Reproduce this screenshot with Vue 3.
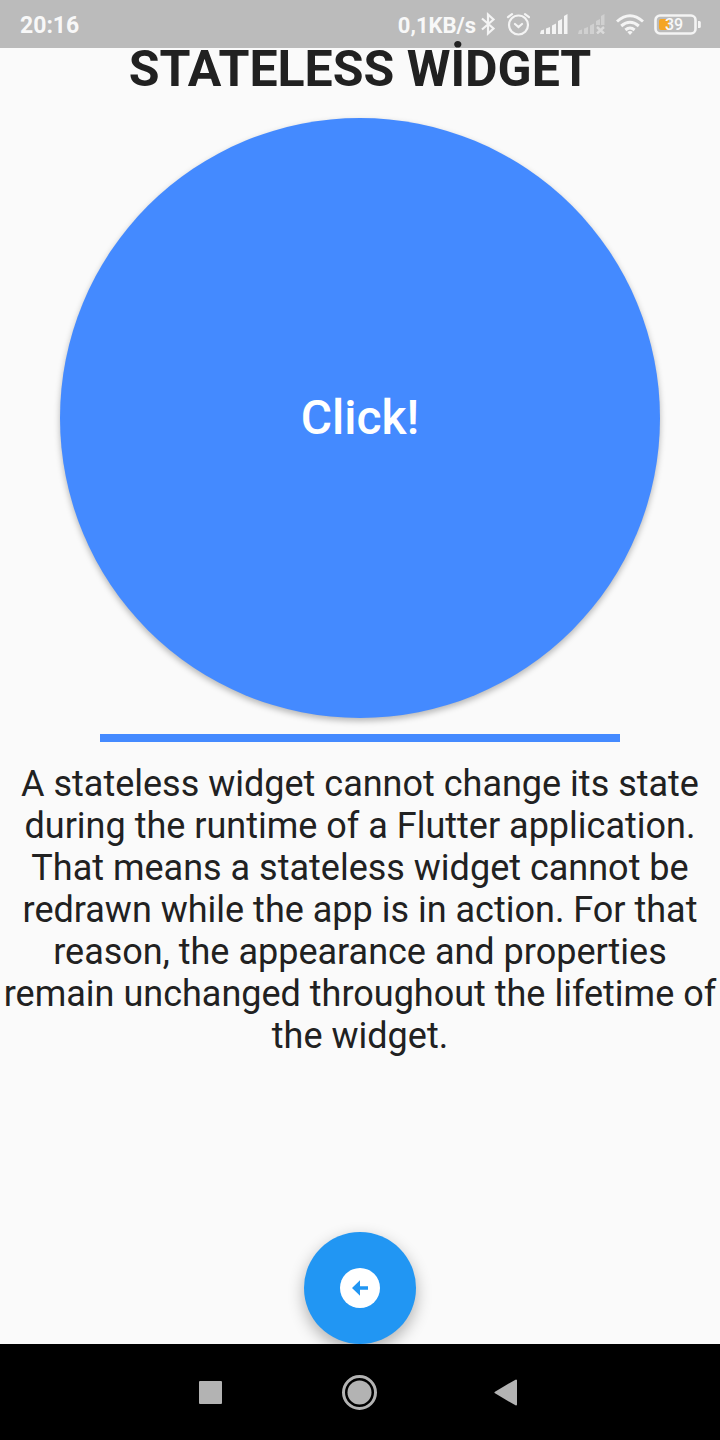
<script setup>
const description =
  'A stateless widget cannot change its state during the runtime of a Flutter application. That means a stateless widget cannot be redrawn while the app is in action. For that reason, the appearance and properties remain unchanged throughout the lifetime of the widget.'
</script>

<template>
  <div class="screen">
    <header class="status">
      <time class="clock">20:16</time>
      <div class="indicators">
        <span class="speed">0,1KB/s</span>
        <svg class="bluetooth" width="16" height="24" viewBox="0 0 16 24" fill="none" stroke="#f4f4f4" stroke-width="2.200" aria-hidden="true">
          <path d="M2 6.500 13.500 16.500 8 21.500V2.500l5.500 5L2 17.500" />
        </svg>
        <svg class="alarm" width="24" height="24" viewBox="0 0 24 24" fill="none" stroke="#f4f4f4" stroke-width="2.200" stroke-linecap="round" aria-hidden="true">
          <circle cx="12.500" cy="13" r="9.500" />
          <path d="M2 5.200 6 2.200M23 5.200 19 2.200M9 12l3.500 3 3.500-3" />
        </svg>
        <svg class="signal" width="28" height="20" viewBox="0 0 28 20" fill="#f4f4f4" aria-hidden="true">
          <path d="M0 20 1 16.500 4 15.500V20ZM6 14.500 10 13V20H6ZM12 11.500 16 9.500V20H12ZM18 7 22 5V20H18ZM24 2 27.500 0V20H24Z" />
        </svg>
        <svg class="signal-off" width="28" height="20" viewBox="0 0 28 20" fill="#d0d0d0" aria-hidden="true">
          <path d="M0 20 1 16.500 4 15.500V20ZM6 14.500 10 13V20H6ZM12 11.500 16 9.500V20H12ZM18 7 22 5V11H18ZM23 2 26.500 0V11H23Z" />
          <path d="m19 13 7 6.500m0-6.500-7 6.500" stroke="#dadada" stroke-width="2.400" />
        </svg>
        <svg class="wifi" width="28" height="21" viewBox="0 0 28 21" fill="none" stroke="#f4f4f4" stroke-width="3" aria-hidden="true">
          <path d="M1 7.500Q14-4 27 7.500M5.200 12Q14 4.500 22.800 12M9.400 16Q14 12 18.600 16" />
          <path d="m11.300 18q2.700-2 5.400 0L14 21Z" fill="#f4f4f4" stroke="none" />
        </svg>
        <div class="battery">
          <svg width="48" height="21" viewBox="0 0 48 21" aria-hidden="true">
            <rect x="1.500" y="1.500" width="40" height="18" rx="4.500" fill="none" stroke="#f4f4f4" stroke-width="2.600" />
            <path d="M44 7h1.500q1.300 0 1.300 1.500v4q0 1.500-1.300 1.500H44Z" fill="#f4f4f4" />
            <rect x="5" y="5" width="10" height="11" rx="2" fill="#f5a623" />
          </svg>
          <span class="level">39</span>
        </div>
      </div>
    </header>

    <main class="content">
      <h1>STATELESS WİDGET</h1>
      <button class="click" type="button">Click!</button>
      <hr class="rule" />
      <p>{{ description }}</p>
      <button class="back" type="button" aria-label="Back">
        <svg width="40" height="40" viewBox="0 0 40 40" aria-hidden="true">
          <circle cx="20" cy="20" r="20" fill="#fff" />
          <path d="M12 20 20 12.300V18.200H28V21.800H20V27.700Z" fill="#2196f3" />
        </svg>
      </button>
    </main>

    <nav class="navigation" aria-label="System">
      <button type="button" aria-label="Recent apps">
        <svg width="48" height="48" viewBox="0 0 48 48"><rect x="13" y="13" width="23" height="23" rx="1" fill="#b3b3b3" /></svg>
      </button>
      <button type="button" aria-label="Home">
        <svg width="48" height="48" viewBox="0 0 48 48">
          <circle cx="23.500" cy="24.500" r="16" fill="none" stroke="#b3b3b3" stroke-width="3" />
          <circle cx="23.500" cy="24.500" r="12" fill="#b3b3b3" />
        </svg>
      </button>
      <button type="button" aria-label="Go back">
        <svg width="48" height="48" viewBox="0 0 48 48"><path d="M9.500 24.500 30 12.500V36.500Z" fill="#b3b3b3" stroke="#b3b3b3" stroke-width="2" stroke-linejoin="round" /></svg>
      </button>
    </nav>
  </div>
</template>

<style>
body {
  margin: 0;
  background: #fafafa;
}
</style>

<style scoped>
.screen {
  display: flex;
  flex-direction: column;
  min-height: 100vh;
  background: #fafafa;
  color: #212121;
  font-family: Roboto, "Noto Sans", sans-serif;
}

button {
  padding: 0;
  border: 0;
  font-family: inherit;
  cursor: pointer;
}

svg {
  display: block;
}

.status {
  display: flex;
  align-items: center;
  justify-content: space-between;
  box-sizing: border-box;
  height: 48px;
  padding: 0 18px 0 20px;
  background: #bbb;
  color: #f8f8f8;
  font-size: 23px;
  font-weight: 700;
  line-height: 28px;
}

.clock,
.speed {
  padding-top: 4px;
}

.speed {
  font-size: 22px;
}

.indicators {
  display: flex;
  align-items: center;
}

.bluetooth {
  margin-left: 4px;
}

.alarm {
  margin-left: 10px;
}

.signal,
.signal-off,
.wifi,
.battery {
  margin-left: 10px;
}

.battery {
  position: relative;
}

.level {
  position: absolute;
  top: 0;
  left: 11px;
  font-size: 16px;
  font-weight: 500;
  line-height: 21px;
}

.content {
  display: flex;
  flex: 1;
  flex-direction: column;
}

h1 {
  position: relative;
  margin: 0;
  font-size: 50px;
  font-weight: 700;
  line-height: 42px;
  text-align: center;
}

.click {
  aspect-ratio: 1;
  box-sizing: border-box;
  margin: 28px 60px 0;
  padding-bottom: 2px;
  border-radius: 50%;
  background: #448aff;
  box-shadow: 0 3px 6px rgba(0, 0, 0, 0.28);
  color: #fff;
  font-size: 48px;
  font-weight: 500;
}

.rule {
  align-self: stretch;
  height: 8px;
  margin: 16px 100px 0;
  border: 0;
  background: #448aff;
}

p {
  margin: 21px 0 0;
  font-size: 36px;
  line-height: 42px;
  text-align: center;
}

.back {
  display: grid;
  place-items: center;
  align-self: center;
  width: 112px;
  height: 112px;
  margin-top: auto;
  border-radius: 50%;
  background: #2196f3;
  box-shadow: 0 6px 16px rgba(0, 0, 0, 0.3);
}

.navigation {
  position: relative;
  display: flex;
  align-items: center;
  justify-content: center;
  gap: 102px;
  height: 96px;
  background: #000;
}

.navigation button {
  background: transparent;
}
</style>
